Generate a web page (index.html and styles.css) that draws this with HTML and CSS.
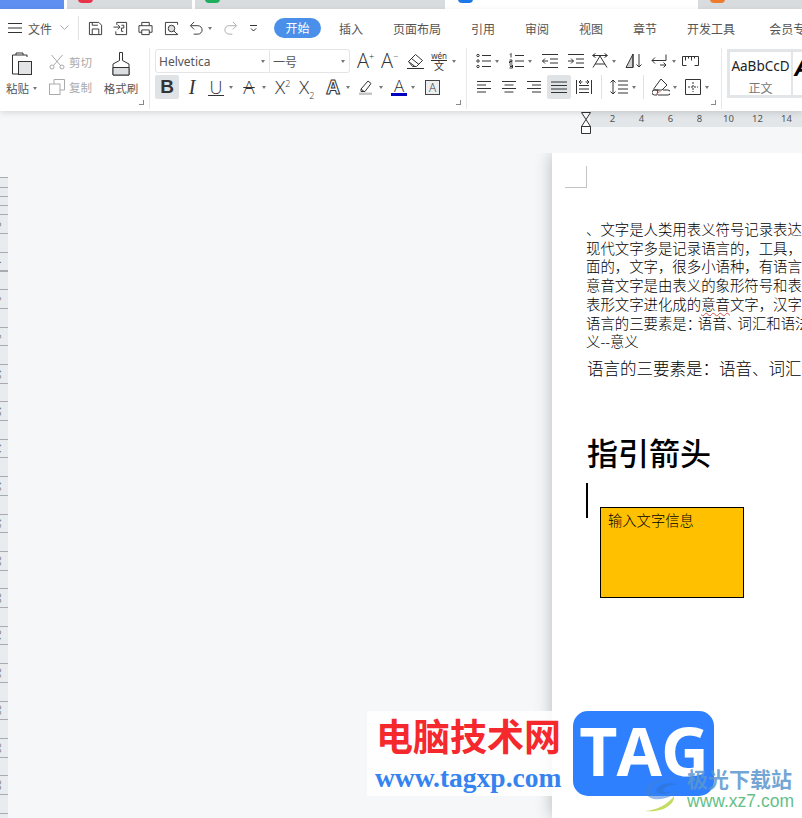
FILE: index.html
```html
<!DOCTYPE html>
<html lang="zh-CN">
<head>
    <meta charset="UTF-8">
    <title>WPS 文字</title>
    <link rel="stylesheet" href="styles.css">
</head>
<body>
    <svg class="defs" width="0" height="0">
        <symbol id="i-save" viewBox="0 0 16 16"><path d="M1.5 1.5h10l3 3v10h-13zM4.5 14.500v-6h7v6M4.500 1.500v3h6"/></symbol>
        <symbol id="i-export" viewBox="0 0 16 16"><path d="M4 4V1.500h10.500v13H3V11M.5 6.500H7M5 4l2.500 2.500L5 9M9 4.500h2.500v3H9v3.500h2"/></symbol>
        <symbol id="i-print" viewBox="0 0 16 16"><path d="M4 5V1.500h8V5M4 12H1V5h14v7h-3M4 9.500h8v5H4z"/></symbol>
        <symbol id="i-preview" viewBox="0 0 16 16"><path d="M14.500 4V1.500h-13v13h13v-1"/><circle cx="8" cy="8" r="3.500" fill="#ddd"/><path d="M10.500 10.500l3.500 3.500"/></symbol>
        <symbol id="i-undo" viewBox="0 0 16 16"><path d="M5.500 1L1.500 5l4 4M2 5h7.500a4.500 4.500 0 0 1 0 9H5"/></symbol>
        <symbol id="i-redo" viewBox="0 0 16 16"><path d="M10.500 1l4 4-4 4M14 5H6.500a4.500 4.500 0 0 0 0 9H10"/></symbol>
        <symbol id="i-more" viewBox="0 0 9 9"><path d="M1 1.500h7M2 4.500l2.500 2.500L7 4.500"/></symbol>
        <symbol id="i-paste" viewBox="0 0 22 24"><path d="M16 5V3H1.500v19H7"/><path d="M5 3V1h7v2"/><rect x="7.500" y="9.500" width="13" height="13" fill="#e2e4e6"/></symbol>
        <symbol id="i-cut" viewBox="0 0 16 16"><circle cx="3" cy="13" r="2"/><circle cx="13" cy="13" r="2"/><path d="M4.500 11.500L13.500 1M11.500 11.500L2.500 1"/></symbol>
        <symbol id="i-copy" viewBox="0 0 16 16"><path d="M5 5V.5h10.500V11H11"/><rect x=".5" y="5" width="10.500" height="10.500"/></symbol>
        <symbol id="i-brush" viewBox="0 0 18 24"><path d="M7.500 .5h3v8l6.500 3.500v11H1V12l6.500-3.500z"/><path d="M1 15.500h16v7.500H1z" fill="#dcdfe2"/></symbol>
        <symbol id="i-eraser" viewBox="0 0 17 16"><path d="M1.500 8.500l7-7 7 6-6 6h-4z"/><path d="M1.500 8.500l6.500 5M4.500 5.500l7.500 6M0 15.500h17"/></symbol>
        <symbol id="i-marker" viewBox="0 0 16 16"><path d="M3 10l7-8 3 2.500-6 8H3zM3 10l3 2.500"/><rect x="1" y="13.500" width="13" height="2.500" fill="#c4c6c8" stroke="none"/></symbol>
        <symbol id="i-list" viewBox="0 0 16 16"><g fill="#fff"><circle cx="2" cy="2.500" r="1.200"/><circle cx="2" cy="8" r="1.200"/><circle cx="2" cy="13.500" r="1.200"/></g><path d="M6 2.500h9M6 8h9M6 13.500h9"/></symbol>
        <symbol id="i-numlist" viewBox="0 0 16 16"><path d="M6 2.500h9M6 8h9M6 13.500h9"/><path d="M1 1.500l1-1v4M.5 7h2.500v1.500H.5v1.500h3M.5 12h3v3h-3M1 13.500h2"/></symbol>
        <symbol id="i-outdent" viewBox="0 0 16 16"><path d="M0 1.500h16M8 6h8M8 10h8M0 14.500h16M6 8H.5M3 5.500L.5 8 3 10.500"/></symbol>
        <symbol id="i-indent" viewBox="0 0 16 16"><path d="M0 1.500h16M8 6h8M8 10h8M0 14.500h16M0 8h5.500M3 5.500L5.500 8 3 10.500"/></symbol>
        <symbol id="i-spacing" viewBox="0 0 16 16"><path d="M1 14.500L8 3l7 11.500M3 11h10M.5 2.500L3.500 .5M.5 2.500l3 2M15.500 2.500l-3-2M15.500 2.500l-3 2M1 2.500h14"/></symbol>
        <symbol id="i-sort" viewBox="0 0 17 16"><path d="M1 14.500L8 1v13.500z" fill="#cfd2d4"/><path d="M8 1v13.500H1M14 1v13M11.500 11.500L14 14l2.500-2.500"/></symbol>
        <symbol id="i-return" viewBox="0 0 16 16"><path d="M15 1.500v6H1M4 4.500L1 7.500l3 3M9 12h6M12.500 9.500L15 12l-2.500 2.500"/></symbol>
        <symbol id="i-ruler" viewBox="0 0 17 16"><path d="M.5 3.500h16v9M.5 3.500v9M3.500 3.500v4M6.500 3.500v2M9.500 3.500v4M12.500 3.500v2M.5 12.500h4M12.500 12.500h4" /></symbol>
        <symbol id="i-left" viewBox="0 0 16 16"><path d="M1 2.500h14M1 6h9M1 9.500h14M1 13h9"/></symbol>
        <symbol id="i-center" viewBox="0 0 16 16"><path d="M1 2.500h14M3.500 6h9M1 9.500h14M3.500 13h9"/></symbol>
        <symbol id="i-right" viewBox="0 0 16 16"><path d="M1 2.500h14M6 6h9M1 9.500h14M6 13h9"/></symbol>
        <symbol id="i-justify" viewBox="0 0 16 16"><path d="M0 3h16M0 6.500h16M0 10h16M0 13.500h16"/></symbol>
        <symbol id="i-distribute" viewBox="0 0 16 16"><path d="M.5 1v14M15.500 1v14M3 6.500h10M3 10h10M3 13.500h10M3 3h3.500M9.500 3H13M5 1L3 3l2 2M11 1l2 2-2 2"/></symbol>
        <symbol id="i-linespace" viewBox="0 0 18 16"><path d="M3 1v14M.5 3.500L3 1l2.500 2.500M.5 12.500L3 15l2.500-2.500M8 2h10M8 6h10M8 10h10M8 14h10"/></symbol>
        <symbol id="i-shade" viewBox="0 0 18 18"><path d="M9 1l6 6-5 5H3.500L2 10.500z"/><path d="M1 12h5l-1 5H2.500a2 2 0 0 1 0-5M6 17h10a2 2 0 0 0 0-5H11" /><path d="M3 17l7-5" stroke="#d88"/></symbol>
        <symbol id="i-border" viewBox="0 0 16 16"><path d="M.5.5h15v15H.5z"/><path d="M8 3v10M3 8h10" stroke-dasharray="2 1"/></symbol>
    </svg>

    <div class="tabstrip">
        <div class="tab tab-home"></div>
        <div class="tab tab-one"><i class="tab-icon red"></i></div>
        <div class="tab tab-two"><i class="tab-icon green"></i></div>
        <div class="tab tab-active"><i class="tab-icon blue"></i></div>
        <div class="tab tab-last"><i class="tab-icon orange"></i></div>
    </div>

    <div class="ribbon">
        <div class="menu-row">
            <svg class="ic m8" width="14" height="10" viewBox="0 0 14 10"><path d="M0 .5h14M0 5h14M0 9.500h14"/></svg>
            <span class="file-label m6">文件</span>
            <svg class="ic gray m8" width="9" height="6" viewBox="0 0 9 6"><path d="M.5.5l4 4 4-4"/></svg>
            <i class="vline tall m9"></i>
            <svg class="ic m9" width="15" height="15"><use href="#i-save"/></svg>
            <svg class="ic m10" width="15" height="15"><use href="#i-export"/></svg>
            <svg class="ic m10" width="15" height="15"><use href="#i-print"/></svg>
            <svg class="ic m11" width="15" height="15"><use href="#i-preview"/></svg>
            <svg class="ic m10" width="15" height="15"><use href="#i-undo"/></svg>
            <i class="caret m4"></i>
            <svg class="ic gray m11" width="15" height="15"><use href="#i-redo"/></svg>
            <svg class="ic m11" width="9" height="9"><use href="#i-more"/></svg>
            <span class="pill m16">开始</span>
            <nav class="menu-tabs">
                <span>插入</span>
                <span>页面布局</span>
                <span>引用</span>
                <span>审阅</span>
                <span>视图</span>
                <span>章节</span>
                <span>开发工具</span>
                <span class="last-tab">会员专享</span>
            </nav>
        </div>

        <div class="tools">
            <section class="group group-clip">
                <div class="tool-col paste-col">
                    <svg class="ic" width="22" height="24"><use href="#i-paste"/></svg>
                    <span class="tool-label">粘贴<i class="caret m4"></i></span>
                </div>
                <div class="tool-col clip-col">
                    <span class="clip-item"><svg class="ic gray" width="16" height="16"><use href="#i-cut"/></svg>剪切</span>
                    <span class="clip-item"><svg class="ic gray" width="16" height="16"><use href="#i-copy"/></svg>复制</span>
                </div>
                <div class="tool-col brush-col">
                    <svg class="ic" width="18" height="24"><use href="#i-brush"/></svg>
                    <span class="tool-label">格式刷</span>
                </div>
                <i class="launcher"></i>
            </section>

            <section class="group group-font">
                <div class="row">
                    <div class="select font-select"><span>Helvetica</span><i class="caret"></i></div>
                    <div class="select size-select"><span>一号</span><i class="caret"></i></div>
                    <span class="glyph a-size m7">A<sup>+</sup></span>
                    <span class="glyph a-size m6">A<sup>−</sup></span>
                    <svg class="ic m8" width="17" height="16"><use href="#i-eraser"/></svg>
                    <span class="pinyin m7"><small>wén</small><span>文</span></span>
                    <i class="caret m5"></i>
                </div>
                <div class="row">
                    <span class="pressed"><b class="bold-b">B</b></span>
                    <span class="glyph italic-i m6">I</span>
                    <span class="glyph under-u m9">U</span>
                    <i class="caret m5"></i>
                    <span class="glyph strike-a m8">A</span>
                    <i class="caret m5"></i>
                    <span class="glyph script-x m9">X<sup>2</sup></span>
                    <span class="glyph script-x m6">X<sub>2</sub></span>
                    <span class="glyph outline-a m8">A</span>
                    <i class="caret m5"></i>
                    <svg class="ic m8" width="16" height="16"><use href="#i-marker"/></svg>
                    <i class="caret m5"></i>
                    <span class="glyph color-a m8">A</span>
                    <i class="caret m4"></i>
                    <span class="glyph box-a m10">A</span>
                </div>
                <i class="launcher"></i>
            </section>

            <section class="group group-para">
                <div class="row">
                    <svg class="ic" width="16" height="16"><use href="#i-list"/></svg>
                    <i class="caret m3"></i>
                    <svg class="ic m10" width="16" height="16"><use href="#i-numlist"/></svg>
                    <i class="caret m3"></i>
                    <svg class="ic m10" width="16" height="16"><use href="#i-outdent"/></svg>
                    <svg class="ic m10" width="16" height="16"><use href="#i-indent"/></svg>
                    <svg class="ic m8" width="16" height="16"><use href="#i-spacing"/></svg>
                    <i class="caret m4"></i>
                    <svg class="ic m9" width="17" height="16"><use href="#i-sort"/></svg>
                    <svg class="ic m9" width="16" height="16"><use href="#i-return"/></svg>
                    <i class="caret m5"></i>
                    <svg class="ic m6" width="17" height="16"><use href="#i-ruler"/></svg>
                </div>
                <div class="row">
                    <svg class="ic" width="16" height="16"><use href="#i-left"/></svg>
                    <svg class="ic m9" width="16" height="16"><use href="#i-center"/></svg>
                    <svg class="ic m9" width="16" height="16"><use href="#i-right"/></svg>
                    <span class="pressed m5"><svg class="ic" width="16" height="16"><use href="#i-justify"/></svg></span>
                    <svg class="ic m5" width="16" height="16"><use href="#i-distribute"/></svg>
                    <i class="vline m9"></i>
                    <svg class="ic m8" width="18" height="16"><use href="#i-linespace"/></svg>
                    <i class="caret m4"></i>
                    <i class="vline m7"></i>
                    <svg class="ic m8" width="18" height="18"><use href="#i-shade"/></svg>
                    <i class="caret m3"></i>
                    <svg class="ic m8" width="16" height="16"><use href="#i-border"/></svg>
                    <i class="caret m4"></i>
                </div>
                <i class="launcher"></i>
            </section>

            <section class="styles">
                <div class="style-card">
                    <span class="style-sample">AaBbCcD</span>
                    <span class="style-name">正文</span>
                </div>
                <div class="style-next">A</div>
            </section>
        </div>
    </div>

    <main class="workspace">
        <div class="hruler">
            <svg class="ic ruler-marker" width="10" height="22" viewBox="0 0 10 22"><path d="M.5.5h9L5 7.500zM5 7.500l4.500 7h-9zM.5 14.500h9v7h-9z" fill="#fff"/></svg>
            <div class="hruler-track">
                <span>2</span><span>4</span><span>6</span><span>8</span><span>10</span><span>12</span><span>14</span>
            </div>
        </div>

        <div class="canvas">
            <div class="vruler">
                <div class="vruler-head"></div>
                <span>2</span><span>4</span><span>6</span><span>8</span><span>10</span><span>12</span><span>14</span><span>16</span>
                <span>18</span><span>20</span><span>22</span><span>24</span><span>26</span><span>28</span><span>30</span><span>32</span>
            </div>

            <article class="page">
                <div class="crop-mark"></div>
                <p class="body-text">、文字是人类用表义符号记录表达<br>现代文字多是记录语言的，工具，<br>面的，文字，很多小语种，有语言<br>意音文字是由表义的象形符号和表<br>表形文字进化成的<span class="spell">意音</span>文字，汉字<br>语言的三要素是<span class="tight">：</span>语音<span class="tight">、</span>词汇和语法<br>义--意义</p>
                <p class="body-large">语言的三要素是：语音、词汇</p>
                <h1 class="guide-title">指引箭头</h1>
                <i class="text-cursor"></i>
                <div class="textbox">输入文字信息</div>
            </article>
        </div>
    </main>

    <div class="watermark">
        <div class="mark-site">
            <div class="mark-cn">电脑技术网</div>
            <div class="mark-url">www.tagxp.com</div>
        </div>
        <div class="mark-tag">TAG</div>
    </div>
    <div class="watermark-xz">
        <svg class="xz-logo" width="46" height="36" viewBox="0 0 46 36">
            <path d="M3 17C1 8 16 0 38 1 22 2 8 8 9 15c1 6 14 7 25-1-4 9-27 14-31 3z" fill="#3f82d8" opacity=".55"/>
            <path d="M13 14c2-6 15-9 22-5-6-1-13 1-15 5 0 2 5 3 8 2-5 3-15 2-15-2z" fill="#3270c4" opacity=".5"/>
            <path d="M2 35C14 34 24 29 31 20c1 8-11 17-29 15z" fill="#c3dc62"/>
        </svg>
        <div class="xz-text">
            <div class="xz-cn">极光下载站</div>
            <div class="xz-url">www.xz7.com</div>
        </div>
    </div>
</body>
</html>
```

FILE: styles.css
```css
/* page shell */
html, body { margin: 0; padding: 0; }
body {
    width: 802px;
    height: 818px;
    overflow: hidden;
    position: relative;
    display: flex;
    flex-direction: column;
    background-color: #f5f7f9;
    font-family: "Noto Sans CJK SC", "Noto Sans", sans-serif;
    color: #333;
}
.defs { position: absolute; }
i { display: block; font-style: normal; }

/* spacing helpers for the toolbar rows */
.m3 { margin-left: 3px; }
.m4 { margin-left: 4px; }
.m5 { margin-left: 5px; }
.m6 { margin-left: 6px; }
.m7 { margin-left: 7px; }
.m8 { margin-left: 8px; }
.m9 { margin-left: 9px; }
.m10 { margin-left: 10px; }
.m11 { margin-left: 11px; }
.m16 { margin-left: 16px; }

/* window tabs, only their lower edge is in the shot */
.tabstrip { display: flex; height: 9px; background-color: #fff; flex-shrink: 0; }
.tab { height: 9px; background-color: #d9dcde; overflow: hidden; }
.tab-home { width: 64px; background-color: #5f8ff0; }
.tab-one { width: 125px; margin-left: 3px; padding-left: 11px; box-sizing: border-box; }
.tab-two { width: 250px; margin-left: 3px; padding-left: 10px; box-sizing: border-box; }
.tab-active { width: 253px; padding-left: 13px; box-sizing: border-box; background-color: #fff; }
.tab-last { width: 104px; padding-left: 12px; box-sizing: border-box; }
.tab-icon { width: 15px; height: 13px; margin-top: -10px; border-radius: 4px; }
.red { background-color: #e8344a; }
.green { background-color: #1fae5c; }
.blue { background-color: #1b78e6; }
.orange { background-color: #ee7a2b; }

/* ribbon */
.ribbon {
    height: 102px;
    flex-shrink: 0;
    background-color: #fff;
    box-shadow: 0 2px 6px rgba(0, 0, 0, 0.12);
    position: relative;
    z-index: 2;
}
.menu-row { height: 38px; display: flex; align-items: center; overflow: hidden; font-size: 12px; color: #555; white-space: nowrap; }
.file-label { color: #555; flex-shrink: 0; }
.pill { flex-shrink: 0; width: 47px; height: 20px; line-height: 20px; border-radius: 10px; text-align: center; color: #fff; background-color: #4a90ea; }
.menu-tabs { display: flex; flex-shrink: 0; gap: 30px; margin-left: 18px; }
.last-tab { margin-left: 4px; }

.ic { display: block; flex-shrink: 0; fill: none; stroke: #333; stroke-width: 1; }
.ic.gray { stroke: #aaa; }
.vline { width: 1px; height: 24px; background-color: #dfe1e3; flex-shrink: 0; }
.vline.tall { height: 24px; }
.caret { flex-shrink: 0; width: 0; height: 0; border-left: 2.5px solid transparent; border-right: 2.5px solid transparent; border-top: 3px solid #777; }

.tools { height: 64px; display: flex; }
.group { position: relative; box-sizing: border-box; height: 61px; margin-top: 1px; border-right: 1px solid #e6e8ea; }
.group-clip { width: 150px; display: flex; }
.group-font { width: 317px; padding-left: 5px; }
.group-para { width: 255px; padding-left: 9px; }
.launcher { position: absolute; right: 5px; bottom: 4px; width: 4px; height: 4px; border-right: 1px solid #888; border-bottom: 1px solid #888; }

.row { display: flex; align-items: center; height: 24px; margin-top: 1px; }
.row + .row { margin-top: 2px; }

.tool-col { display: flex; flex-direction: column; align-items: center; }
.paste-col { width: 35px; margin-left: 4px; padding-top: 4px; }
.brush-col { width: 36px; margin-left: 8px; padding-top: 4px; }
.tool-label { display: flex; align-items: center; margin-top: 3px; font-size: 11.500px; line-height: 18px; color: #555; white-space: nowrap; }
.clip-col { margin-left: 10px; width: 46px; align-items: flex-start; padding-top: 6px; gap: 9px; }
.clip-item { display: flex; align-items: center; gap: 4px; font-size: 11.500px; line-height: 16px; color: #aaa; white-space: nowrap; }

.select { box-sizing: border-box; height: 24px; display: flex; align-items: center; justify-content: space-between; padding: 0 4px 0 3px; border: 1px solid #e3e5e7; font-family: "Noto Sans", sans-serif; font-size: 12px; color: #555; }
.font-select { width: 115px; border-radius: 3px 0 0 3px; }
.size-select { width: 80px; border-left: none; border-radius: 0 3px 3px 0; font-family: "Noto Sans CJK SC", sans-serif; }

.pressed { width: 24px; height: 24px; display: flex; align-items: center; justify-content: center; flex-shrink: 0; border-radius: 2px; background-color: #dfe3e6; }
.bold-b { font-family: "Liberation Sans", sans-serif; font-size: 19px; color: #333; }
.glyph { display: block; flex-shrink: 0; width: 16px; line-height: 18px; text-align: center; font-family: "Open Sans", sans-serif; font-weight: 300; font-size: 19px; color: #333; }
.glyph sup, .glyph sub { font-size: 9px; line-height: 0; }
.a-size { width: 18px; text-align: left; font-size: 20px; }
.italic-i { width: 14px; font-family: "Liberation Serif", serif; font-style: italic; font-size: 20px; }
.under-u { border-bottom: 1px solid #333; line-height: 16px; font-size: 18px; }
.strike-a { text-decoration: line-through; text-decoration-thickness: 1px; }
.script-x { width: 18px; text-align: left; }
.outline-a { font-weight: 700; color: #fff; -webkit-text-stroke: 1px #333; }
.color-a { line-height: 14px; font-size: 17px; border-bottom: 3px solid #0000c0; }
.box-a { width: 15px; box-sizing: border-box; border: 1px solid #444; background-color: #eceeef; font-size: 12px; line-height: 13px; }
.pinyin { width: 16px; height: 20px; display: flex; flex-direction: column; align-items: center; flex-shrink: 0; font-size: 10px; line-height: 10px; color: #333; }
.pinyin small { font-family: "Noto Sans", sans-serif; font-size: 8px; line-height: 9px; border-bottom: 1px solid #333; }

.styles { display: flex; box-sizing: border-box; width: 75px; height: 49px; margin: 2px 0 0 5px; padding: 3px 0 3px 3px; background-color: #e3e6e9; overflow: hidden; }
.style-card { width: 61px; flex-shrink: 0; display: flex; flex-direction: column; align-items: center; background-color: #fff; }
.style-sample { font-family: "Noto Sans", sans-serif; font-size: 13.500px; line-height: 28px; color: #222; white-space: nowrap; }
.style-name { font-size: 12px; line-height: 16px; color: #777; }
.style-next { width: 20px; margin-left: 2px; padding-left: 1px; flex-shrink: 0; background-color: #fff; font-family: "Liberation Sans", sans-serif; font-weight: 700; font-style: italic; font-size: 25px; line-height: 30px; color: #000; }

/* document area */
.workspace { flex: 1; min-height: 0; display: flex; flex-direction: column; }
.hruler { position: relative; height: 16px; flex-shrink: 0; display: flex; justify-content: flex-end; }
.ruler-marker { position: absolute; left: 581px; top: 1px; z-index: 1; }
.hruler-track { box-sizing: border-box; width: 212px; padding-left: 8px; display: flex; background-color: #e3e6e9; font-family: "Noto Sans", sans-serif; font-size: 9.500px; line-height: 16px; color: #555; }
.hruler-track span { width: 29px; flex-shrink: 0; text-align: center; }

.canvas { flex: 1; min-height: 0; display: flex; }
.vruler {
    width: 8px;
    flex-shrink: 0;
    margin-top: 50px;
    overflow: hidden;
    background-color: #e9ecef;
    background-image: repeating-linear-gradient(to bottom, #a8acb0 0, #a8acb0 1px, transparent 1px, transparent 18.700px);
    font-family: "Noto Sans", sans-serif;
    font-size: 9px;
    color: #777;
}
.vruler-head { height: 28.600px; background-image: linear-gradient(#a8acb0, #a8acb0), linear-gradient(#a8acb0, #a8acb0); background-size: 100% 1px; background-position: 0 10px, 0 28px; background-repeat: no-repeat; }
.vruler span { display: block; width: 10px; height: 37.400px; line-height: 10px; margin-left: -8px; writing-mode: vertical-rl; text-align: center; white-space: nowrap; }

.page {
    position: relative;
    flex: 1;
    margin: 26px 0 0 544px;
    padding-top: 13px;
    overflow: hidden;
    background-color: #fff;
    box-shadow: 0 0 16px rgba(0, 0, 0, 0.26);
    clip-path: inset(0 0 0 -20px);
    color: #000;
}
.crop-mark { box-sizing: border-box; width: 22px; height: 22px; margin-left: 13px; border-right: 1px solid #c4c4c4; border-bottom: 1px solid #c4c4c4; }
.body-text { margin: 32px 0 0 34px; font-size: 14.400px; font-weight: 300; line-height: 18.700px; white-space: nowrap; }
.tight { letter-spacing: -3.400px; }
.spell { text-decoration: underline wavy #d05050 1px; text-underline-offset: 2px; }
.body-large { margin: 6px 0 0 35px; font-size: 16.500px; font-weight: 300; line-height: 22px; white-space: nowrap; }
.guide-title { margin: 53px 0 0 35px; font-size: 31px; line-height: 40px; font-weight: 500; white-space: nowrap; }
.text-cursor { position: absolute; left: 34px; top: 330px; width: 2px; height: 35px; background-color: #000; }
.textbox { box-sizing: border-box; width: 144px; height: 91px; margin: 35px 0 0 48px; padding: 2px 7px; border: 1px solid #000; background-color: #ffc000; font-size: 14.300px; font-weight: 300; line-height: 20px; white-space: nowrap; }

/* watermarks laid over the shot */
.watermark { position: absolute; left: 367px; top: 711px; z-index: 3; display: flex; }
.mark-site { width: 206px; height: 85px; background-color: rgba(255, 255, 255, 0.85); }
.mark-cn { margin: 4px 0 0 9px; font-size: 37px; line-height: 40px; font-weight: 700; color: #f4282d; white-space: nowrap; }
.mark-url { margin: 9px 0 0 8px; font-family: "Liberation Serif", serif; font-size: 27.500px; line-height: 28px; font-weight: 700; color: #3483f0; white-space: nowrap; }
.mark-tag { width: 141px; height: 85px; border-radius: 15px; background-color: #2f80ff; color: #fff; text-align: center; font-family: "Open Sans", sans-serif; font-weight: 700; font-size: 66px; line-height: 79px; letter-spacing: -1px; }
.watermark-xz { position: absolute; left: 643px; top: 766px; z-index: 4; display: flex; }
.xz-logo { margin-top: 10px; flex-shrink: 0; }
.xz-text { margin-left: -2px; }
.xz-cn { font-size: 21px; line-height: 24px; font-weight: 700; color: rgba(90, 150, 205, 0.85); white-space: nowrap; }
.xz-url { font-family: "Liberation Sans", sans-serif; font-size: 17.500px; line-height: 22px; color: #66bf88; white-space: nowrap; }
```
